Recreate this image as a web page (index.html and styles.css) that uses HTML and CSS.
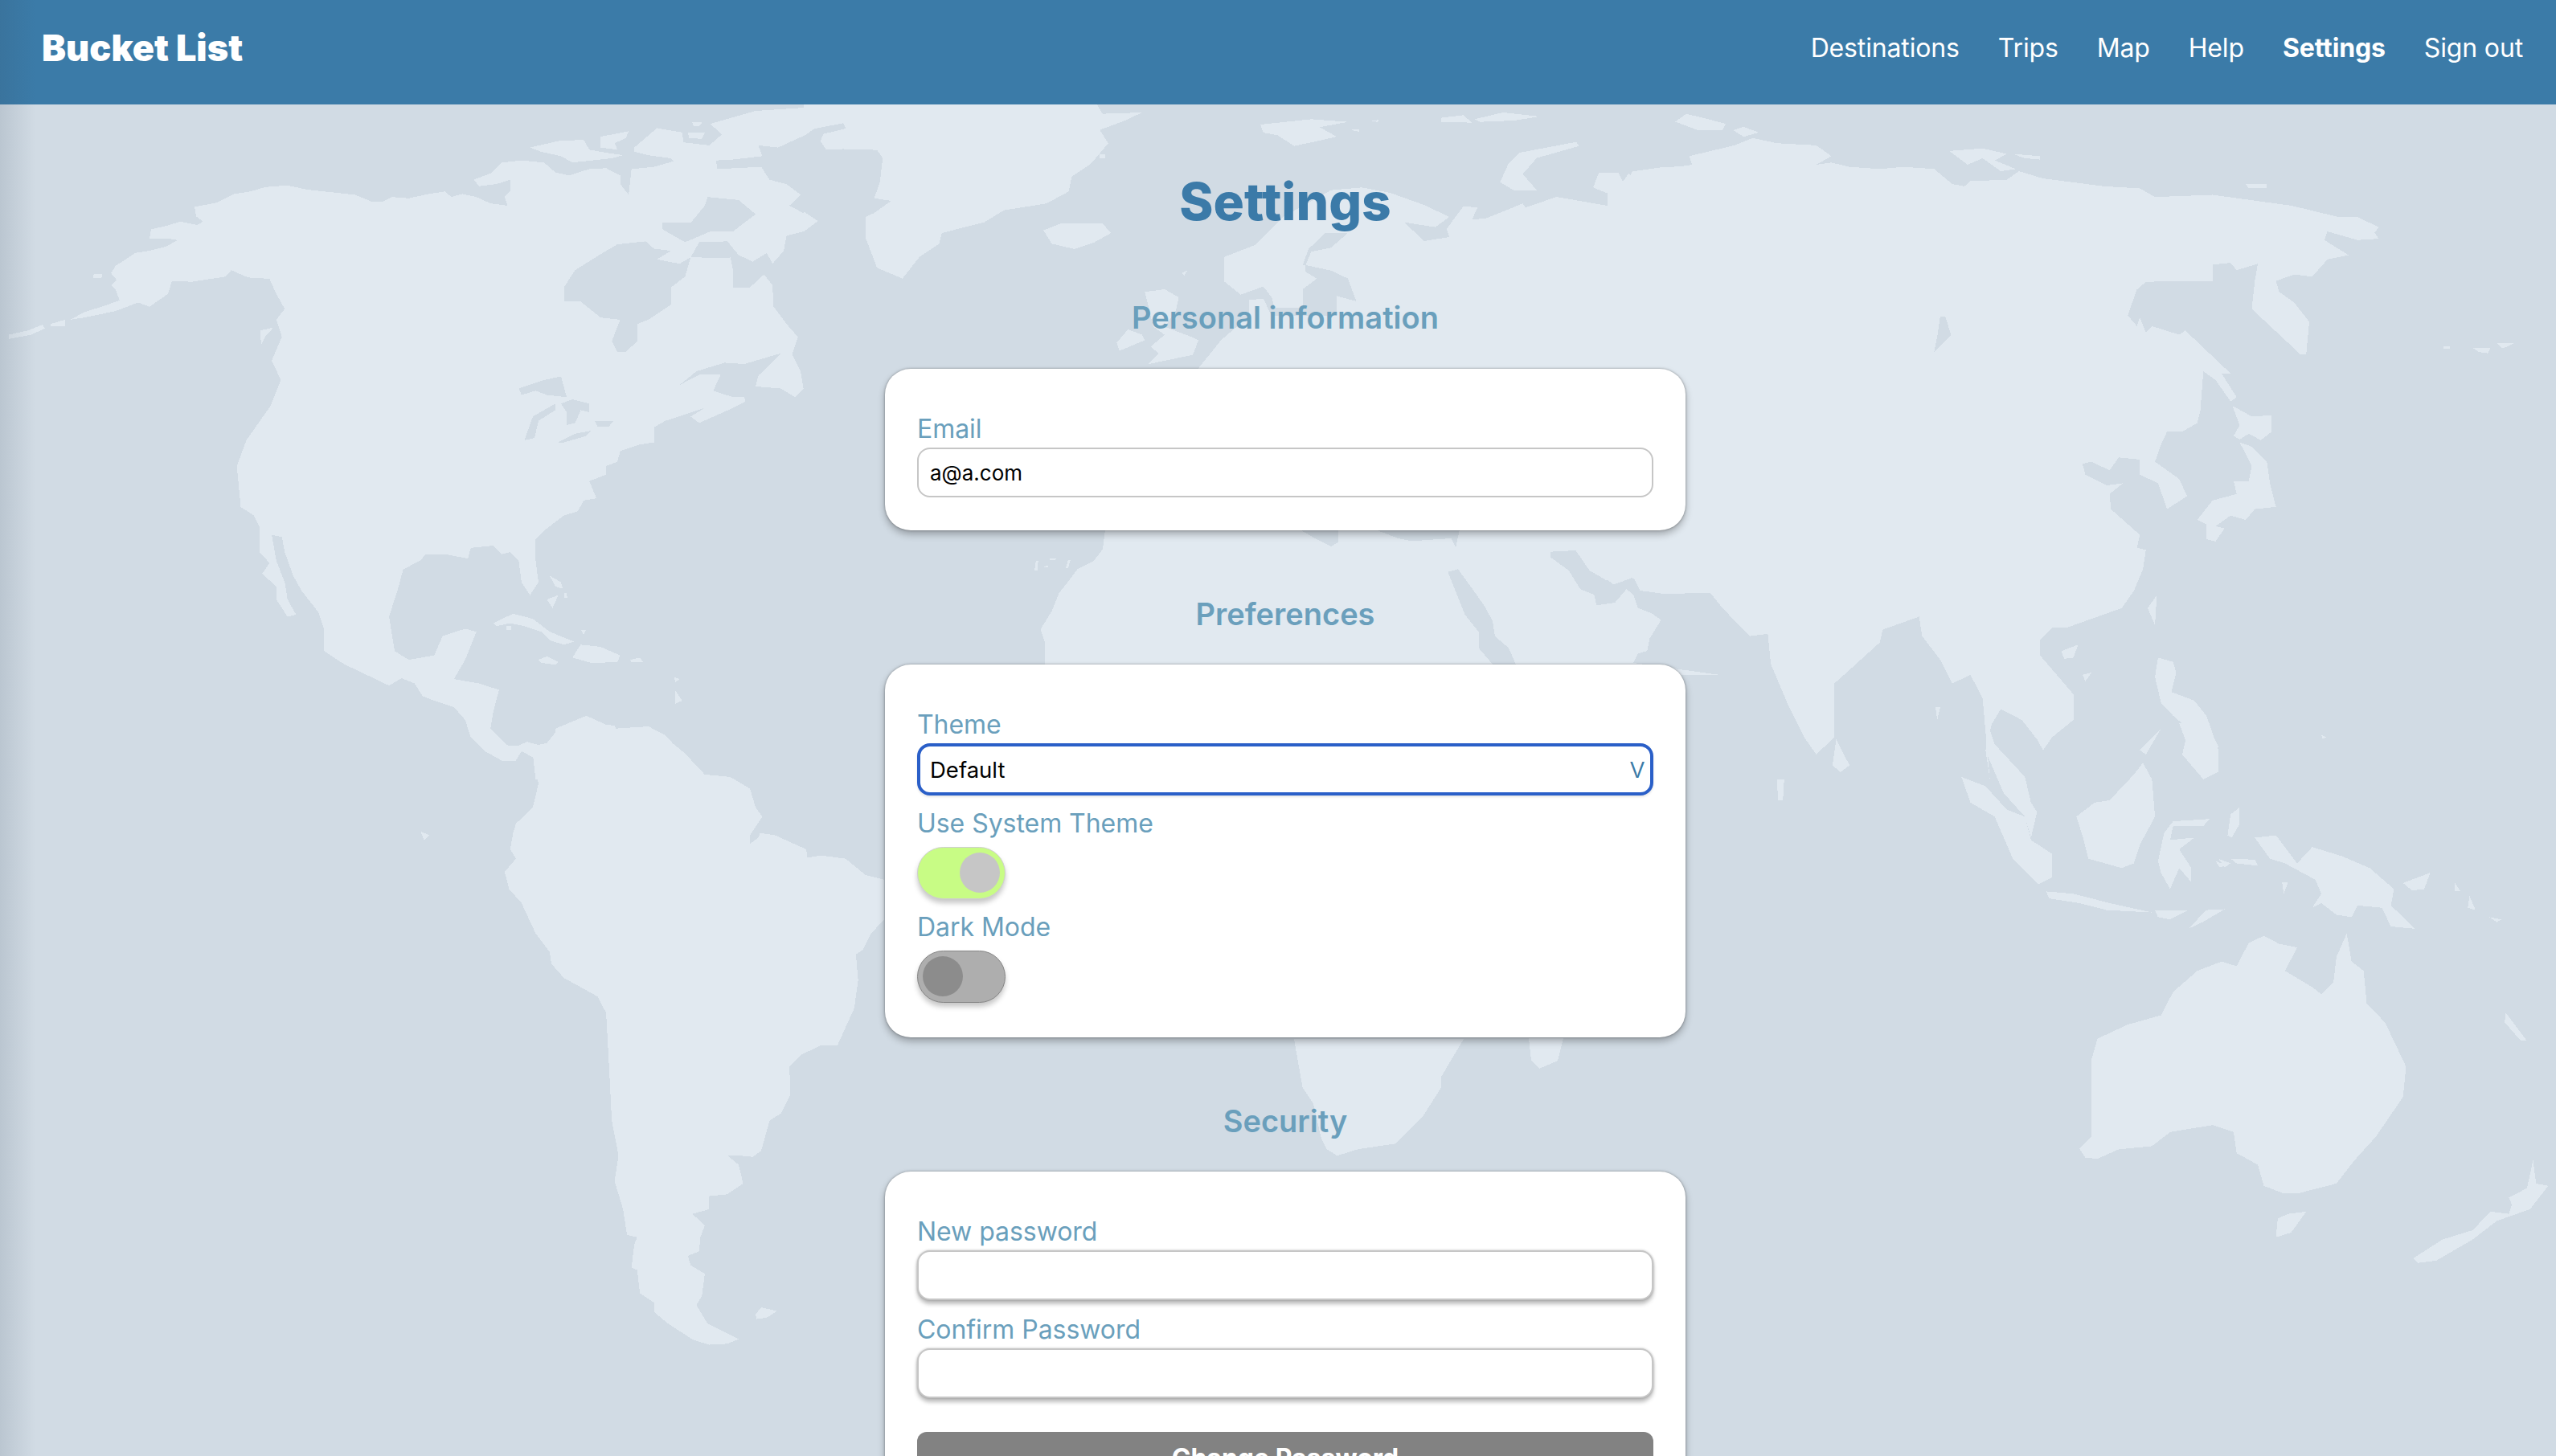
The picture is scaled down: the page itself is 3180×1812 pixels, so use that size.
FILE: index.html
```html
<!DOCTYPE html>
<html lang="en">
<head>
<meta charset="utf-8">
<title>Bucket List</title>
<link rel="stylesheet" href="styles.css">
</head>
<body>
<svg class="map" viewBox="0 0 3180 1812" width="3180" height="1812" shape-rendering="crispEdges" aria-hidden="true">
  <g transform="translate(0,130) scale(.7015,.5357)">
    <polygon class="land" points="125,500 150,482 185,468 212,455 205,430 197,420 207,408 197,392 205,375 225,358 240,345 265,340 295,330 315,315 300,312 265,312 268,290 295,282 320,272 350,280 360,272 348,260 345,238 385,228 415,208 445,202 470,192 510,188 545,198 560,200 630,210 658,225 680,225 695,215 725,218 760,208 790,202 800,215 820,208 845,215 870,230 900,235 895,215 905,200 905,175 880,185 850,190 840,175 870,160 890,135 925,130 965,135 985,158 1010,165 1045,150 1075,148 1100,165 1100,185 1115,210 1120,150 1160,145 1200,130 1270,130 1272,150 1350,145 1365,175 1395,185 1420,210 1400,235 1450,270 1425,295 1395,305 1390,340 1370,370 1360,345 1335,365 1310,350 1290,320 1300,385 1300,425 1330,425 1355,395 1370,420 1372,470 1395,510 1415,540 1405,580 1420,620 1425,660 1410,680 1385,660 1340,655 1320,680 1322,690 1300,705 1240,740 1225,725 1250,705 1180,735 1160,750 1160,785 1135,790 1100,805 1095,830 1075,840 1075,860 1045,875 1058,915 1035,920 1025,945 1000,955 965,990 950,1010 950,1060 955,1110 940,1140 925,1110 920,1060 905,1040 890,1045 875,1025 835,1030 830,1055 790,1045 755,1045 745,1060 715,1080 707,1120 690,1190 700,1270 725,1290 770,1280 785,1235 825,1218 845,1225 825,1290 805,1335 850,1345 885,1360 875,1410 870,1450 900,1490 945,1490 985,1480 985,1450 1040,1420 1090,1450 1150,1445 1180,1465 1250,1568 950,1568 945,1510 925,1500 890,1525 860,1490 835,1470 825,1430 805,1400 770,1385 750,1375 735,1345 712,1333 690,1350 650,1325 610,1300 575,1270 575,1220 565,1180 535,1130 520,1095 505,1040 500,1005 482,1000 490,1060 505,1110 510,1150 525,1185 510,1190 490,1150 490,1120 465,1090 478,1065 460,1040 460,980 450,955 427,935 420,840 437,780 480,700 498,640 482,595 500,540 490,500 505,475 490,440 478,405 440,402 410,385 400,400 340,412 305,410 298,440 265,470 245,460 205,480 150,495"/>
    <polygon class="land" points="940,100 990,85 1035,82 1045,105 1065,110 1105,118 1085,125 1015,135 995,120 960,110"/>
    <polygon class="land" points="1065,75 1115,62 1110,78 1090,90 1095,105 1065,100"/>
    <polygon class="land" points="1125,100 1165,55 1210,65 1212,88 1258,95 1280,70 1260,45 1340,15 1420,8 1480,0 1568,0 1568,100 1465,105 1455,85 1500,55 1495,42 1450,50 1430,70 1380,100 1345,95 1352,120 1300,128 1270,130 1198,135 1190,125 1150,118 1125,110"/>
    <polygon class="land" points="1220,65 1250,65 1245,80 1222,78"/>
    <polygon class="land" points="1228,42 1245,42 1240,50 1230,50"/>
    <polygon class="land" points="15,535 50,525 75,512 80,520 55,535 15,545"/>
    <polygon class="land" points="90,510 115,500 115,515 90,515"/>
    <polygon class="land" points="165,395 182,393 180,403 165,403"/>
    <polygon class="land" points="462,525 485,518 470,540 463,560"/>
    <polygon class="land" points="875,1205 910,1183 945,1195 975,1225 1018,1248 1000,1255 975,1245 960,1225 930,1212 905,1205 880,1212"/>
    <polygon class="land" points="1015,1285 1030,1255 1065,1260 1100,1280 1095,1295 1050,1298"/>
    <polygon class="land" points="955,1290 970,1282 990,1295 985,1302 960,1297"/>
    <polygon class="land" points="1118,1290 1135,1285 1140,1295 1120,1296"/>
    <polygon class="land" points="975,1095 995,1110 998,1125 985,1120"/>
    <polygon class="land" points="970,1150 990,1140 980,1170"/>
    <polygon class="land" points="1000,1135 1005,1135 1006,1146 1000,1146"/>
    <polygon class="land" points="1030,1220 1040,1220 1035,1232"/>
    <polygon class="land" points="1195,1330 1205,1335 1198,1342"/>
    <polygon class="land" points="1198,1362 1210,1385 1198,1392"/>
    <polygon class="land" points="898,1212 906,1212 906,1220 898,1220"/>
    <polygon class="sea" points="1000,425 1020,385 1065,348 1095,325 1145,318 1160,335 1190,340 1165,360 1205,370 1225,355 1290,357 1310,350 1290,318 1240,320 1225,355 1215,400 1190,425 1190,465 1150,500 1130,510 1130,550 1110,575 1095,575 1085,550 1100,500 1065,495 1030,458 1000,458"/>
    <polygon class="sea" points="1175,275 1225,275 1250,235 1255,215 1310,222 1340,255 1300,295 1260,295 1215,320 1175,290"/>
    <polygon class="sea" points="1205,652 1235,620 1285,600 1320,603 1385,578 1345,630 1340,655 1320,680 1300,680 1265,665 1278,628 1240,628"/>
    <polygon class="sea" points="920,660 965,640 995,632 1005,680 970,675 950,665 925,675"/>
    <polygon class="sea" points="930,780 945,725 985,695 985,710 955,735 948,775"/>
    <polygon class="sea" points="995,695 1015,685 1045,695 1045,715 1030,710 1020,740 1005,745 1005,715"/>
    <polygon class="sea" points="990,785 1020,765 1048,758 1040,770 995,787"/>
    <polygon class="sea" points="1055,735 1088,735 1080,748 1060,748"/>
    <polygon class="sea" points="1285,250 1320,245 1335,255 1300,262"/>
  </g>
  <g transform="translate(0,900) scale(.7015,.5816)">
    <polygon class="land" points="830,0 870,0 870,20 890,45 915,50 935,40 965,50 985,20 1005,5 1040,0 1090,5 1095,20 1150,15 1185,35 1215,65 1250,110 1295,115 1330,140 1340,180 1352,200 1330,240 1330,258 1345,245 1348,235 1375,240 1430,270 1432,288 1455,283 1500,290 1535,325 1568,335 1568,420 1545,450 1530,485 1518,495 1522,550 1515,610 1500,650 1485,690 1455,690 1420,710 1400,735 1402,795 1385,835 1365,850 1350,915 1335,928 1310,925 1290,925 1310,945 1318,985 1290,1008 1258,1012 1258,1040 1228,1050 1250,1075 1242,1100 1240,1130 1220,1140 1225,1160 1250,1178 1245,1225 1235,1245 1255,1285 1310,1318 1290,1328 1258,1330 1230,1320 1185,1285 1160,1260 1160,1240 1135,1220 1130,1170 1120,1165 1125,1115 1130,1100 1112,1095 1105,1040 1090,980 1097,925 1085,850 1080,730 1075,620 1060,585 1000,545 978,515 975,490 950,450 925,385 903,355 895,318 915,290 905,270 910,235 915,215 945,180 955,130 948,75 925,60 915,80 890,80 860,60 835,30"/>
    <polygon class="land" points="1340,1265 1350,1250 1378,1258 1360,1272 1342,1275"/>
    <polygon class="land" points="746,232 762,240 752,250"/>
  </g>
  <g transform="translate(1000,130) scale(.7015,.3333)">
    <polygon class="land" points="0,110 20,90 70,70 75,90 35,110 30,135 45,165 130,170 140,200 135,290 125,350 155,360 125,405 110,420 110,500 130,610 175,650 205,570 240,520 245,480 320,440 355,395 430,370 470,325 475,270 510,220 540,145 525,95 570,60 600,30 530,35 520,0 0,0"/>
    <polygon class="land" points="0,400 25,435 0,475"/>
    <polygon class="land" points="425,470 455,445 530,445 545,480 515,515 480,540 440,520"/>
    <polygon class="land" points="810,75 900,55 965,65 915,85 945,120 915,135 870,155 840,115 815,105"/>
    <polygon class="land" points="1005,60 1020,58 1018,66"/>
    <polygon class="land" points="970,95 985,92 985,102"/>
    <polygon class="land" points="1130,50 1170,40 1185,68 1130,65"/>
    <polygon class="land" points="1190,55 1240,30 1305,45 1260,60 1200,65"/>
    <polygon class="land" points="1235,290 1250,220 1270,180 1370,140 1375,155 1300,200 1275,260 1300,320 1260,322"/>
    <polygon class="land" points="525,185 535,185 535,200 525,200"/>
    <polygon class="land" points="670,630 680,620 675,640"/>
    <polygon class="land" points="555,890 575,840 600,860 605,880 560,920"/>
    <polygon class="land" points="605,700 640,690 665,720 660,770 640,830 690,870 700,880 690,935 610,970 630,930 615,905 640,860 620,830"/>
    <polygon class="land" points="745,570 800,525 850,420 935,320 990,310 1040,330 1100,375 1145,420 1120,458 1065,440 1100,510 1145,495 1140,465 1170,380 1195,385 1185,430 1210,425 1275,370 1280,385 1335,345 1430,380 1435,340 1400,310 1410,255 1445,255 1455,300 1470,250 1520,235 1568,230 1568,1020 680,1020 700,985 740,880 790,790 790,730 815,725 830,790 885,790 885,760 835,760 830,720 815,680 775,710 745,660"/>
    <polygon class="sea" points="885,600 895,540 925,480 965,480 935,535 900,550 890,600"/>
    <polygon class="sea" points="885,690 910,650 890,625 890,600 935,620 965,650 980,735 945,715 945,790 885,790"/>
  </g>
  <g transform="translate(1240,650) scale(.574,.3333)">
    <polygon class="land" points="235,30 1568,30 1568,570 105,570 105,450 95,400 120,330 135,265 160,210 175,175 210,145 230,100"/>
    <polygon class="land" points="85,145 90,145 88,180 82,180"/>
    <polygon class="land" points="115,135 130,135 125,142 115,142"/>
    <polygon class="land" points="100,165 112,162 110,170"/>
    <polygon class="land" points="155,140 160,140 155,170 150,170"/>
    <polygon class="sea" points="660,30 740,30 740,75 725,90 690,60"/>
    <polygon class="sea" points="825,30 1003,30 995,95 985,60 900,70 870,60"/>
    <polygon class="sea" points="978,185 1000,175 1040,270 1060,320 1075,370 1080,425 1110,470 1125,530 1075,530 1045,470 1045,410 1015,345 1000,280"/>
    <polygon class="sea" points="1200,110 1255,105 1285,180 1320,215 1350,225 1380,205 1395,255 1450,268 1550,262 1568,285 1568,570 1380,525 1390,490 1410,480 1415,435 1440,365 1420,340 1390,320 1380,270 1365,250 1340,300 1300,310 1295,270 1265,250 1240,180 1200,130"/>
  </g>
  <g transform="translate(1080,1340) scale(.6633,.3333)">
    <polygon class="land" points="799,-140 1117,-140 1075,0 1075,40 1040,150 1020,190 990,250 920,270 880,295 860,270 850,230 835,100 815,40"/>
  </g>
  <polygon class="land" points="1902,1292 1945,1292 1938,1320 1915,1330 1905,1320"/>
  <g transform="translate(2000,130) scale(.7526,.5357)">
    <polygon class="land" points="0,158 20,190 35,160 45,180 95,165 90,150 140,140 135,120 210,95 240,78 280,90 345,95 370,120 345,140 370,135 400,145 450,150 490,145 540,150 570,185 590,190 600,178 660,175 680,155 720,172 765,180 820,190 880,195 905,215 1000,210 1130,235 1210,262 1240,262 1275,285 1268,298 1275,312 1240,315 1190,295 1185,315 1225,350 1190,360 1165,400 1135,395 1105,410 1110,435 1135,460 1160,505 1155,580 1145,580 1065,475 1070,410 1075,370 1040,385 1030,368 1000,372 1000,410 960,410 890,412 875,430 860,490 875,515 880,495 890,530 900,515 945,535 955,525 1030,625 1015,625 1040,680 1030,690 1005,640 985,620 965,570 985,620 980,710 975,740 950,760 925,760 915,790 905,830 945,870 958,910 925,940 910,880 880,860 880,825 845,820 830,850 800,830 785,835 790,860 825,885 852,880 830,905 832,940 880,1000 875,1030 890,1035 885,1080 870,1130 850,1170 800,1195 760,1215 735,1215 715,1245 715,1280 770,1370 770,1430 735,1470 720,1500 710,1475 685,1430 650,1405 635,1440 625,1500 632,1568 620,1380 600,1325 570,1345 550,1290 520,1235 515,1190 455,1220 450,1250 395,1320 375,1345 375,1470 345,1510 325,1470 300,1400 270,1300 265,1230 235,1235 190,1170 170,1135 100,1135 40,1100 10,1115 0,1105"/>
    <polygon class="sea" points="550,492 558,492 568,535 540,575 545,540"/>
    <polygon class="land" points="112,40 130,22 155,30 195,45 190,60 150,60"/>
    <polygon class="land" points="208,60 225,52 250,65 225,75"/>
    <polygon class="land" points="565,108 620,102 660,115 640,130 675,150 650,155 620,125 595,140"/>
    <polygon class="land" points="670,115 715,120 715,128 690,125"/>
    <polygon class="land" points="1055,185 1090,185 1090,195 1060,195"/>
    <polygon class="land" points="1033,700 1065,725 1098,722 1098,760 1080,780 1060,765 1045,778 1035,770 1045,745"/>
    <polygon class="land" points="1045,785 1065,795 1090,830 1095,880 1105,935 1070,940 1055,965 1030,955 1005,980 990,975 975,965 1000,920 1040,905 1035,875 1060,875 1065,840"/>
    <polygon class="land" points="990,975 1020,985 1005,1015 990,1010"/>
    <polygon class="land" points="1430,565 1460,565 1455,578 1440,575"/>
    <polygon class="land" points="1470,555 1498,555 1480,567"/>
    <polygon class="land" points="1382,562 1392,562 1392,568 1382,568"/>
    <polygon class="land" points="750,1270 778,1255 770,1285 755,1288"/>
    <polygon class="land" points="893,1170 908,1140 905,1210"/>
    <polygon class="land" points="910,1285 935,1295 940,1320 932,1365 970,1385 990,1420 1010,1500 1010,1550 985,1568 950,1510 960,1450 935,1420 915,1390 905,1330"/>
    <polygon class="land" points="880,1500 915,1450 890,1510"/>
    <polygon class="land" points="785,1325 800,1320 790,1340"/>
    <polygon class="land" points="542,1400 550,1400 545,1430"/>
    <polygon class="land" points="1180,1465 1188,1470 1182,1474"/>
  </g>
  <g transform="translate(2000,900) scale(.7526,.5816)">
    <polygon class="land" points="378,35 400,90 385,105 372,90"/>
    <polygon class="land" points="628,0 640,45 690,115 700,170 710,190 700,245 690,200 655,150 625,60"/>
    <polygon class="land" points="585,115 625,135 660,185 690,200 700,250 735,280 735,330 712,345 670,290 640,200 600,170"/>
    <polygon class="land" points="725,360 770,365 830,385 900,405 825,400 780,385 730,375"/>
    <polygon class="land" points="905,400 960,400 930,420 910,415"/>
    <polygon class="land" points="960,440 990,400 1020,398 985,425"/>
    <polygon class="land" points="775,200 805,170 830,165 870,110 885,85 900,120 905,200 880,260 870,300 850,310 795,290 785,240"/>
    <polygon class="land" points="910,295 920,235 935,210 995,205 985,220 935,220 930,250 970,245 945,270 965,310 965,340 945,310 930,355 915,320"/>
    <polygon class="land" points="945,0 990,0 1010,50 985,110 965,70"/>
    <polygon class="land" points="1005,295 1025,305 1012,308"/>
    <polygon class="land" points="1030,290 1070,292 1075,305 1040,300"/>
    <polygon class="land" points="1030,195 1045,180 1045,215 1032,245 1025,240"/>
    <polygon class="land" points="1070,245 1105,240 1140,300 1165,265 1215,285 1260,310 1300,355 1295,390 1335,440 1295,435 1280,395 1240,390 1230,415 1205,410 1180,385 1165,395 1180,365 1170,335 1120,300 1095,290"/>
    <polygon class="land" points="1315,342 1360,320 1350,355 1330,358"/>
    <polygon class="land" points="1400,340 1410,360 1400,360"/>
    <polygon class="land" points="1425,370 1435,400 1422,395"/>
    <polygon class="land" points="1458,415 1478,420 1470,426"/>
    <polygon class="land" points="780,910 800,885 800,720 810,675 860,645 915,625 935,575 975,530 1015,510 1040,520 1060,470 1085,455 1110,472 1140,480 1120,530 1165,565 1180,580 1200,555 1205,500 1222,450 1230,510 1250,530 1255,600 1285,640 1300,680 1320,735 1315,800 1270,885 1235,935 1205,985 1145,1005 1115,1005 1085,990 1075,945 1040,920 1035,875 1000,860 930,875 900,905 845,912 810,932 790,930"/>
    <polygon class="land" points="1108,1060 1125,1050 1155,1045 1130,1090 1105,1100"/>
    <polygon class="land" points="1332,1145 1380,1105 1430,1085 1460,1045 1490,1050 1495,1030 1490,1015 1520,995 1530,935 1535,985 1555,990 1525,1040 1470,1065 1430,1105 1370,1150 1340,1155"/>
    <polygon class="land" points="1485,620 1520,680 1510,680 1483,640"/>
    <polygon class="land" points="280,120 292,120 290,165 282,165"/>
    <polygon class="land" points="1010,290 1030,300 1020,308"/>
    <polygon class="land" points="1115,340 1125,340 1118,365"/>
  </g>
</svg>
<div class="edge"></div>
<header class="topbar">
  <div class="brand">Bucket List</div>
  <nav class="nav">
    <a>Destinations</a>
    <a>Trips</a>
    <a>Map</a>
    <a>Help</a>
    <a class="current">Settings</a>
    <a>Sign out</a>
  </nav>
</header>
<main class="page">
  <h1 class="title">Settings</h1>

  <h2 class="section-title">Personal information</h2>
  <section class="card">
    <div class="field">
      <label class="label">Email</label>
      <input class="input" type="text" value="a@a.com">
    </div>
  </section>

  <h2 class="section-title">Preferences</h2>
  <section class="card card-prefs">
    <div class="field">
      <label class="label">Theme</label>
      <div class="select-wrap">
        <select class="input select"><option>Default</option></select>
        <span class="caret">v</span>
      </div>
    </div>
    <div class="field">
      <label class="label">Use System Theme</label>
      <div class="toggle on"><span class="knob"></span></div>
    </div>
    <div class="field">
      <label class="label">Dark Mode</label>
      <div class="toggle off"><span class="knob"></span></div>
    </div>
  </section>

  <h2 class="section-title">Security</h2>
  <section class="card">
    <div class="field">
      <label class="label">New password</label>
      <input class="input raised" type="password">
    </div>
    <div class="field">
      <label class="label">Confirm Password</label>
      <input class="input raised" type="password">
    </div>
    <button class="button" type="button">Change Password</button>
  </section>
</main>
</body>
</html>
```

FILE: styles.css
```css
* { box-sizing: border-box; }

html, body {
  margin: 0;
  height: 1812px;
  overflow: hidden;
}

body {
  position: relative;
  background: #d1dbe4;
  font-family: Inter, "Noto Sans", sans-serif;
}

.map {
  position: absolute;
  left: 0;
  top: 0;
  display: block;
}

.land { fill: #e1e9f0; }
.sea { fill: #d1dbe4; }

.edge {
  position: absolute;
  left: 0;
  top: 0;
  width: 44px;
  height: 100%;
  background: linear-gradient(to right, rgba(50, 70, 90, .14), rgba(50, 70, 90, 0));
  z-index: 2;
  pointer-events: none;
}

.topbar {
  position: relative;
  height: 130px;
  padding: 0 41px 12px 52px;
  display: flex;
  align-items: center;
  justify-content: space-between;
  background: #3b7ba8;
  color: #fff;
}

.brand {
  font-size: 45px;
  font-weight: 900;
}

.nav {
  display: flex;
  gap: 48px;
  font-size: 32px;
  font-weight: 400;
  letter-spacing: -.15px;
}

.nav .current { font-weight: 700; }

.page {
  position: relative;
  padding-left: 18px;
  display: flex;
  flex-direction: column;
  align-items: center;
}

.title {
  margin: 82px 0 0;
  font-size: 64px;
  font-weight: 800;
  color: #3b7aa8;
}

.section-title {
  margin: 81px 0 40px;
  font-size: 38px;
  font-weight: 600;
  color: #6a9fbc;
}

.title + .section-title { margin: 83px 0 41px; }

.card {
  width: 996px;
  padding: 41px 40px 41px;
  flex: none;
  background: #fff;
  border-radius: 32px;
  box-shadow: 0 0 3px rgba(0, 0, 0, .35), 0 5px 10px rgba(0, 0, 0, .28);
}

.card-prefs { padding-bottom: 43px; }

.field {
  margin-top: 14px;
  display: flex;
  flex-direction: column;
  gap: 4px;
}

.field + .field { margin-top: 15px; }

.label {
  font-size: 32px;
  font-weight: 400;
  letter-spacing: -.05px;
  color: #6a9fbc;
}

.input {
  display: block;
  width: 100%;
  height: 62px;
  padding: 0 14px;
  border: 2px solid #c6c6c6;
  border-radius: 16px;
  background: #fff;
  font-family: Inter, "Noto Sans", sans-serif;
  font-size: 26px;
  color: #000;
  outline: none;
}

.raised {
  margin-bottom: 2px;
  box-shadow: 0 5px 5px rgba(0, 0, 0, .25), 0 0 3px rgba(0, 0, 0, .25);
}

.select-wrap { position: relative; }

.select {
  height: 65px;
  padding: 0 12px;
  border: 4px solid #2a5fc8;
  font-size: 27.5px;
  appearance: none;
  box-shadow: 0 2px 3px rgba(0, 0, 0, .1);
}

.caret {
  position: absolute;
  right: 10px;
  top: 10px;
  font-size: 36px;
  font-weight: 300;
  line-height: 40px;
  color: #3b7ba8;
}

.toggle {
  width: 110px;
  height: 65px;
  margin-top: 6px;
  padding: 6px;
  display: flex;
  border-radius: 33px;
}

.toggle.on {
  justify-content: flex-end;
  background: #c8fc85;
  border: 1.5px solid #cfcfcf;
  box-shadow: 0 5px 6px rgba(0, 0, 0, .22);
}

.toggle.off {
  background: #aeaeae;
  border: 1.5px solid #868686;
  box-shadow: 0 5px 6px rgba(0, 0, 0, .22);
}

.knob {
  width: 50px;
  height: 50px;
  border-radius: 50%;
}

.on .knob { background: #c6c6c6; }
.off .knob { background: #8c8c8c; }

.button {
  display: block;
  width: 100%;
  height: 64px;
  margin-top: 40px;
  padding: 12px 0;
  border: 0;
  border-radius: 12px;
  background: #828282;
  color: #fff;
  font-family: Inter, "Noto Sans", sans-serif;
  font-size: 32px;
  font-weight: 700;
}
```
